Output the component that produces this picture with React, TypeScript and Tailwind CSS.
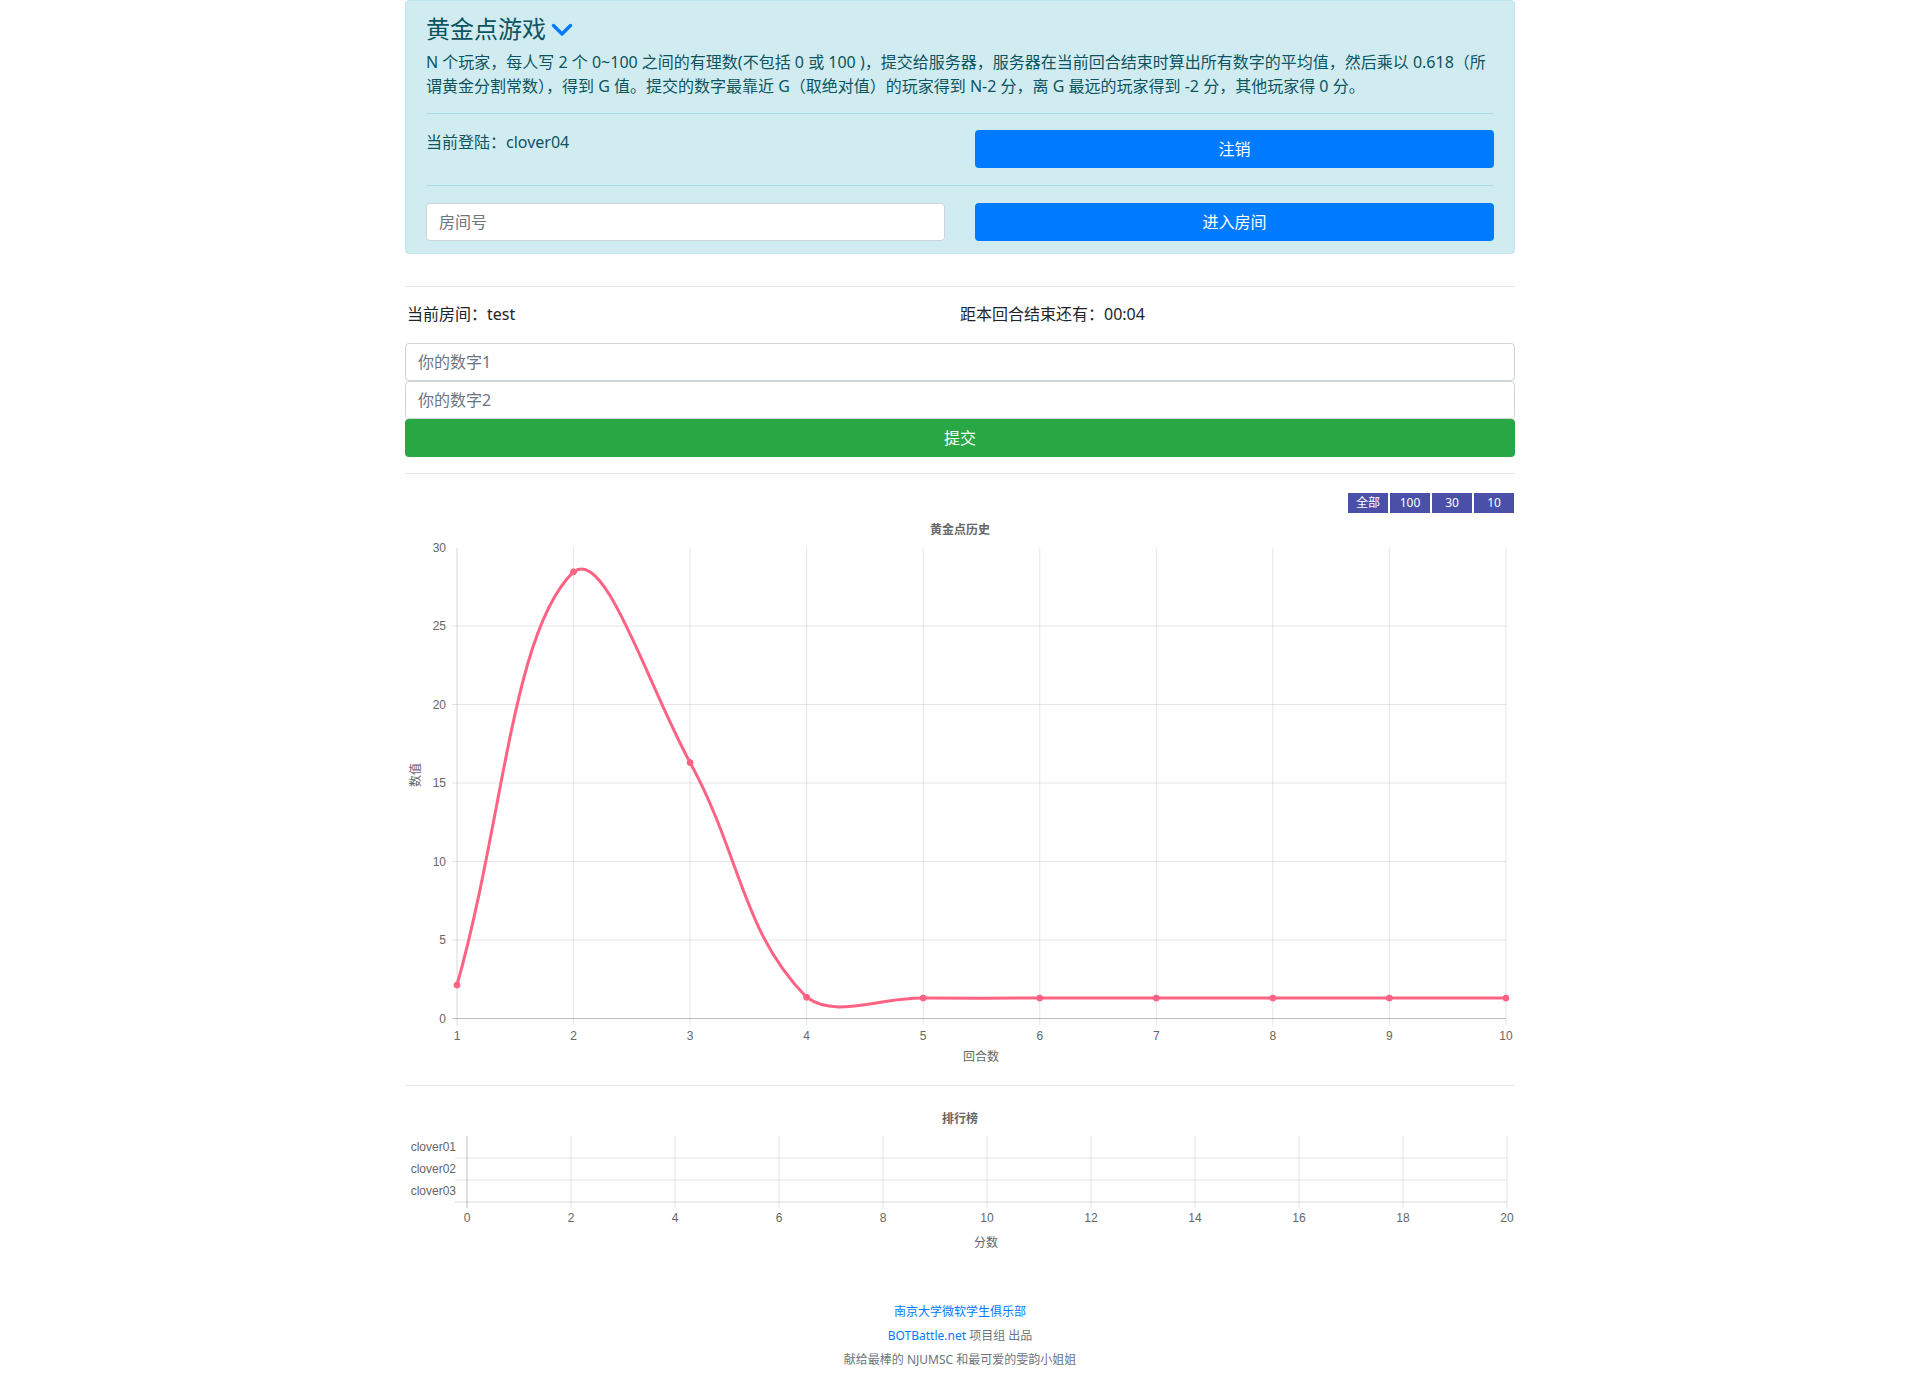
import React from "react";

const BODY_FONT = { fontFamily: '"Noto Sans", "Noto Sans CJK SC", sans-serif' };
const CHART_FONT = '"Liberation Sans", Arial, "Noto Sans CJK SC", sans-serif';

type P = { x: number; y: number };

function LineChart() {
  const W = 1110;
  const H = 572;
  const X0 = 52;
  const DX = 116.55;
  const Y0 = 505.5;
  const SY = 15.7;
  const TOP = Y0 - 30 * SY;
  const data = [2.13, 28.45, 16.3, 1.35, 1.3, 1.3, 1.3, 1.3, 1.3, 1.3];
  const pts: P[] = data.map((v, i) => ({ x: X0 + i * DX, y: Y0 - v * SY }));
  const t = 0.4;
  const cps = pts.map((cur, i) => {
    const prev = i === 0 ? cur : pts[i - 1];
    const next = i === pts.length - 1 ? cur : pts[i + 1];
    const d01 = Math.hypot(cur.x - prev.x, cur.y - prev.y);
    const d12 = Math.hypot(next.x - cur.x, next.y - cur.y);
    let s01 = d01 / (d01 + d12);
    let s12 = d12 / (d01 + d12);
    if (isNaN(s01)) s01 = 0;
    if (isNaN(s12)) s12 = 0;
    const fa = t * s01;
    const fb = t * s12;
    const clampY = (y: number) => Math.max(TOP, Math.min(Y0, y));
    return {
      p: { x: cur.x - fa * (next.x - prev.x), y: clampY(cur.y - fa * (next.y - prev.y)) },
      n: { x: cur.x + fb * (next.x - prev.x), y: clampY(cur.y + fb * (next.y - prev.y)) },
    };
  });
  let d = `M ${pts[0].x} ${pts[0].y}`;
  for (let i = 1; i < pts.length; i++) {
    d += ` C ${cps[i - 1].n.x} ${cps[i - 1].n.y} ${cps[i].p.x} ${cps[i].p.y} ${pts[i].x} ${pts[i].y}`;
  }
  const yTicks = [0, 5, 10, 15, 20, 25, 30];
  const XEND = X0 + 9 * DX;
  return (
    <svg width={W} height={H} className="block" style={{ fontFamily: CHART_FONT }}>
      <text x={555} y={17} textAnchor="middle" dominantBaseline="central" fontSize={12} fontWeight="bold" fill="#666">
        黄金点历史
      </text>
      {yTicks.slice(1, 6).map((v) => (
        <line key={v} x1={X0 - 5} x2={XEND} y1={Y0 - v * SY} y2={Y0 - v * SY} stroke="rgba(0,0,0,0.1)" strokeWidth={1} />
      ))}
      {data.map((_, i) => (
        <line key={i} x1={X0 + i * DX} x2={X0 + i * DX} y1={TOP} y2={Y0 + 7} stroke={i === 0 ? "rgba(0,0,0,0.15)" : "rgba(0,0,0,0.1)"} strokeWidth={1} />
      ))}
      <line x1={X0 - 5} x2={XEND} y1={Y0} y2={Y0} stroke="rgba(0,0,0,0.25)" strokeWidth={1} />
      {yTicks.map((v) => (
        <text key={v} x={41} y={Y0 - v * SY} textAnchor="end" dominantBaseline="central" fontSize={12} fill="#666">
          {v}
        </text>
      ))}
      {data.map((_, i) => (
        <text key={i} x={X0 + i * DX} y={523} textAnchor="middle" dominantBaseline="central" fontSize={12} fill="#666">
          {i + 1}
        </text>
      ))}
      <text x={576} y={544} textAnchor="middle" dominantBaseline="central" fontSize={12} fill="#666">
        回合数
      </text>
      <text x={11} y={262} textAnchor="middle" dominantBaseline="central" fontSize={12} fill="#666" transform="rotate(-90 11 262)">
        数值
      </text>
      <path d={d} fill="none" stroke="rgb(255,99,132)" strokeWidth={3} />
      {pts.map((p, i) => (
        <circle key={i} cx={p.x} cy={p.y} r={3} fill="rgb(255,99,132)" stroke="rgb(255,99,132)" strokeWidth={1} />
      ))}
    </svg>
  );
}

function BarChart() {
  const W = 1110;
  const H = 184;
  const X0 = 62;
  const DX = 104;
  const TOP = 50;
  const ROW = 22;
  const BOTTOM = TOP + 3 * ROW;
  const names = ["clover01", "clover02", "clover03"];
  return (
    <svg width={W} height={H} className="block" style={{ fontFamily: CHART_FONT }}>
      <text x={555} y={33} textAnchor="middle" dominantBaseline="central" fontSize={12} fontWeight="bold" fill="#666">
        排行榜
      </text>
      {Array.from({ length: 11 }).map((_, i) => (
        <line key={i} x1={X0 + i * DX} x2={X0 + i * DX} y1={TOP} y2={BOTTOM + 6} stroke={i === 0 ? "rgba(0,0,0,0.25)" : "rgba(0,0,0,0.1)"} strokeWidth={1} />
      ))}
      {[1, 2, 3].map((k) => (
        <line key={k} x1={X0 - 12} x2={X0 + 10 * DX} y1={TOP + k * ROW} y2={TOP + k * ROW} stroke="rgba(0,0,0,0.1)" strokeWidth={k === 3 ? 1.5 : 1} />
      ))}
      {names.map((n, i) => (
        <text key={n} x={51} y={TOP + i * ROW + 11} textAnchor="end" dominantBaseline="central" fontSize={12} fill="#666">
          {n}
        </text>
      ))}
      {Array.from({ length: 11 }).map((_, i) => (
        <text key={i} x={X0 + i * DX} y={132} textAnchor="middle" dominantBaseline="central" fontSize={12} fill="#666">
          {i * 2}
        </text>
      ))}
      <text x={581} y={157} textAnchor="middle" dominantBaseline="central" fontSize={12} fill="#666">
        分数
      </text>
    </svg>
  );
}

export default function App() {
  return (
    <div className="min-h-[1384px] bg-white text-[#212529]" style={BODY_FONT}>
      <div className="w-[1110px] mx-auto">
        {/* Alert */}
        <div className="border border-[#bee5eb] bg-[#d1ecf1] text-[#0c5460] rounded-[4px] px-5 pt-3 pb-3">
          <div className="flex items-center h-[32px] mb-[5px]">
            <span className="text-[24px] leading-[32px]">黄金点游戏</span>
            <svg width="22" height="14" viewBox="0 0 22 14" className="ml-[5px] mt-[1px]">
              <polyline points="2.5,2.5 11,11 19.5,2.5" fill="none" stroke="#007bff" strokeWidth="3.4" strokeLinecap="round" strokeLinejoin="round" />
            </svg>
          </div>
          <p className="text-[16px] leading-[24px] whitespace-nowrap">
            N 个玩家，每人写 2 个 0~100 之间的有理数(不包括 0 或 100 )，提交给服务器，服务器在当前回合结束时算出所有数字的平均值，然后乘以 0.618（所
            <br />
            谓黄金分割常数），得到 G 值。提交的数字最靠近 G（取绝对值）的玩家得到 N-2 分，离 G 最远的玩家得到 -2 分，其他玩家得 0 分。
          </p>
          <div className="border-t border-[#abdde5] mt-[15px] mb-4" />
          <div className="grid grid-cols-2 gap-[30px] h-[38px]">
            <div className="text-[16px] leading-[24px]">当前登陆：clover04</div>
            <button className="h-[38px] bg-[#007bff] text-white rounded-[4px] text-[16px]">注销</button>
          </div>
          <div className="border-t border-[#abdde5] mt-[17px] mb-[17px]" />
          <div className="grid grid-cols-2 gap-[30px] h-[38px]">
            <input
              placeholder="房间号"
              className="h-[38px] bg-white border border-[#ced4da] rounded-[4px] px-3 text-[16px] placeholder:text-[#6c757d] outline-none"
            />
            <button className="h-[38px] bg-[#007bff] text-white rounded-[4px] text-[16px]">进入房间</button>
          </div>
        </div>

        <div className="border-t border-[rgba(0,0,0,0.1)] mt-8 mb-[15px]" />

        <div className="grid grid-cols-2 h-[24px] mb-[17px] text-[16px] leading-[24px]">
          <div className="pl-[2px]">当前房间：test</div>
          <div>距本回合结束还有：00:04</div>
        </div>

        <div className="flex flex-col">
          <input
            placeholder="你的数字1"
            className="h-[38px] bg-white border border-[#ced4da] rounded-[4px] px-3 text-[16px] placeholder:text-[#6c757d] outline-none"
          />
          <input
            placeholder="你的数字2"
            className="h-[38px] bg-white border border-[#ced4da] rounded-[4px] px-3 text-[16px] placeholder:text-[#6c757d] outline-none"
          />
          <button className="h-[38px] bg-[#28a745] text-white rounded-[4px] text-[16px]">提交</button>
        </div>

        <div className="border-t border-[rgba(0,0,0,0.1)] mt-4" />

        <div className="flex justify-end gap-[2px] pr-[1px] mt-[19px]">
          {["全部", "100", "30", "10"].map((b) => (
            <button key={b} className="w-[40px] h-[20px] bg-[#4a50a8] text-white text-[12px] leading-[20px]">
              {b}
            </button>
          ))}
        </div>

        <LineChart />
        <div className="border-t border-[rgba(0,0,0,0.1)]" />
        <BarChart />

        <div className="mt-[30px] pb-3 text-center text-[12px] leading-[24px] text-[#6c757d]">
          <div className="text-[#007bff]">南京大学微软学生俱乐部</div>
          <div>
            <span className="text-[#007bff]">BOTBattle.net</span> 项目组 出品
          </div>
          <div>献给最棒的 NJUMSC 和最可爱的雯韵小姐姐</div>
        </div>
      </div>
    </div>
  );
}
